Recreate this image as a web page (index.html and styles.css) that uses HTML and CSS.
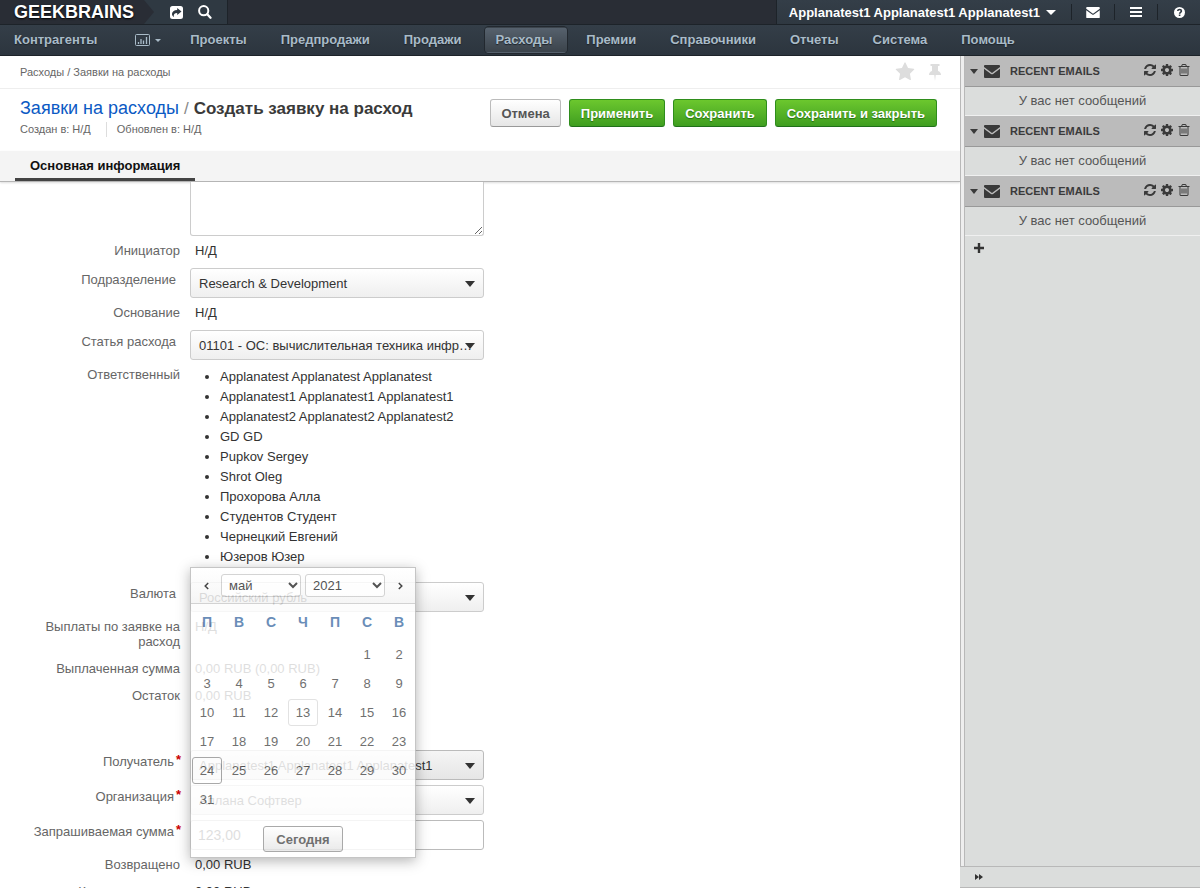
FILE: index.html
```html
<!DOCTYPE html>
<html lang="ru">
<head>
<meta charset="utf-8">
<title>Создать заявку на расход</title>
<link rel="stylesheet" href="styles.css">
</head>
<body>
<svg class="sprite" aria-hidden="true">
  <symbol id="i-mail" viewBox="0 0 16 13"><path fill="currentColor" d="M1 0h14q1 0 1 1v1L8 8 0 2V1Q0 0 1 0zM0 3.700l7 5.200q1 .7 2 0l7-5.200V12q0 1-1 1H1q-1 0-1-1z"/></symbol>
  <symbol id="i-refresh" viewBox="0 0 1792 1792"><path fill="currentColor" d="M1639 1056q0 5-1 7-64 268-268 434.500t-478 166.500q-146 0-282.500-55t-243.500-157l-129 129q-19 19-45 19t-45-19-19-45v-448q0-26 19-45t45-19h448q26 0 45 19t19 45-19 45l-137 137q71 66 161 102t187 36q134 0 250-65t186-179q11-17 53-117 8-23 30-23h192q13 0 22.500 9.500t9.500 22.500zm25-800v448q0 26-19 45t-45 19h-448q-26 0-45-19t-19-45 19-45l138-138q-148-137-349-137-134 0-250 65t-186 179q-11 17-53 117-8 23-30 23h-199q-13 0-22.500-9.500t-9.500-22.500v-7q65-268 270-434.500t480-166.500q146 0 284 55.500t245 156.500l130-129q19-19 45-19t45 19 19 45z"/></symbol>
  <symbol id="i-cog" viewBox="0 0 1792 1792"><path fill="currentColor" d="M1152 896q0-106-75-181t-181-75-181 75-75 181 75 181 181 75 181-75 75-181zm512-109v222q0 12-8 23t-20 13l-185 28q-19 54-39 91 35 50 107 138 10 12 10 25t-9 23q-27 37-99 108t-94 71q-12 0-26-9l-138-108q-44 23-91 38-16 136-29 186-7 28-36 28h-222q-14 0-24.500-8.500t-11.500-21.500l-28-184q-49-16-90-37l-141 107q-10 9-25 9-14 0-25-11-126-114-165-168-7-10-7-23 0-12 8-23 15-21 51-66.500t54-70.500q-27-50-41-99l-183-27q-13-2-21-12.500t-8-23.500v-222q0-12 8-23t19-13l186-28q14-46 39-92-40-57-107-138-10-12-10-24 0-10 9-23 26-36 98.500-107.500t94.500-71.500q13 0 26 10l138 107q44-23 91-38 16-136 29-186 7-28 36-28h222q14 0 24.500 8.500t11.500 21.500l28 184q49 16 90 37l142-107q9-9 24-9 13 0 25 10 129 119 165 170 7 8 7 22 0 12-8 23-15 21-51 66.500t-54 70.500q26 50 41 98l183 28q13 2 21 12.500t8 23.500z"/></symbol>
  <symbol id="i-trash" viewBox="0 0 1792 1792"><path fill="currentColor" d="M704 736v576q0 14-9 23t-23 9h-64q-14 0-23-9t-9-23v-576q0-14 9-23t23-9h64q14 0 23 9t9 23zm256 0v576q0 14-9 23t-23 9h-64q-14 0-23-9t-9-23v-576q0-14 9-23t23-9h64q14 0 23 9t9 23zm256 0v576q0 14-9 23t-23 9h-64q-14 0-23-9t-9-23v-576q0-14 9-23t23-9h64q14 0 23 9t9 23zm128 724v-948h-896v948q0 22 7 40.500t14.500 27 10.500 8.500h832q3 0 10.500-8.500t14.500-27 7-40.500zm-672-1076h448l-48-117q-7-9-17-11h-317q-10 2-17 11zm928 32v64q0 14-9 23t-23 9h-96v948q0 83-47 143.500t-113 60.500h-832q-66 0-113-58.500t-47-141.500v-952h-96q-14 0-23-9t-9-23v-64q0-14 9-23t23-9h309l70-167q15-37 54-63t79-26h320q40 0 79 26t54 63l70 167h309q14 0 23 9t9 23z"/></symbol>
</svg>

<header class="topbar">
  <div class="brand"><a class="brand-name" href="#">GEEKBRAINS</a></div>
  <div class="quick">
    <button class="icon-btn" type="button" aria-label="Поделиться"><svg width="13" height="13" viewBox="0 0 13 13"><path fill="#fff" fill-rule="evenodd" d="M2.500 0h8Q13 0 13 2.500v8Q13 13 10.500 13h-8Q0 13 0 10.500v-8Q0 0 2.500 0zM7.200 2v1.900C4 4 2 5.700 2 8.100c0 1.300.8 2.400 1.900 3-.6-2.700.5-4.200 3.300-4.200v2L11.500 5.400z"/></svg></button>
    <button class="icon-btn" type="button" aria-label="Поиск"><svg width="14" height="14" viewBox="0 0 14 14" fill="none" stroke="#fff" stroke-width="2"><circle cx="5.700" cy="5.700" r="4.600"/><path stroke-linecap="round" stroke-width="2.300" d="M9.300 9.300l3.200 3.400"/></svg></button>
  </div>
  <div class="account">
    <button class="user" type="button">Applanatest1 Applanatest1 Applanatest1 <span class="caret"></span></button>
    <button class="tool" type="button" aria-label="Почта"><svg width="14" height="11"><use href="#i-mail"/></svg></button>
    <button class="tool" type="button" aria-label="Меню"><svg width="12" height="10" viewBox="0 0 12 10"><path fill="#fff" d="M0 0h12v2H0zM0 4h12v2H0zM0 8h12v2H0z"/></svg></button>
    <button class="tool" type="button" aria-label="Справка"><svg width="11" height="11" viewBox="0 0 11 11"><circle cx="5.500" cy="5.500" r="5.500" fill="#fff"/><path d="M3.700 4c.2-2 3.700-2 3.700.1C7.400 5.300 5.600 5.300 5.600 6.700M5.600 7.600v1.500" fill="none" stroke="#2e3740" stroke-width="1.600"/></svg></button>
  </div>
</header>

<nav class="menu">
  <a href="#">Контрагенты</a>
  <a class="chart" href="#" aria-label="Отчёты"><svg width="15" height="12" viewBox="0 0 15 12" fill="none" stroke="currentColor"><rect x=".5" y=".5" width="14" height="11" rx="1"/><path d="M3.500 10V8M6 10V5M8.500 10V6.500M11.500 10V3" stroke-width="1.300"/></svg><span class="caret caret-small"></span></a>
  <a href="#">Проекты</a>
  <a href="#">Предпродажи</a>
  <a href="#">Продажи</a>
  <a class="active" href="#">Расходы</a>
  <a href="#">Премии</a>
  <a href="#">Справочники</a>
  <a href="#">Отчеты</a>
  <a href="#">Система</a>
  <a href="#">Помощь</a>
</nav>

<div class="layout">
  <main class="main">
    <div class="crumbs">
      <span class="crumb-path"><a href="#">Расходы</a> / <a href="#">Заявки на расходы</a></span>
      <button class="mark" type="button" aria-label="В избранное"><svg width="20" height="20" viewBox="0 0 1792 1792"><path fill="#ddd" d="M1728 647q0 22-26 48l-363 354 86 500q1 7 1 20 0 21-10.500 35.500t-30.500 14.500q-19 0-40-12l-449-236-449 236q-22 12-40 12-21 0-31.500-14.500t-10.500-35.500q0-6 2-20l86-500-364-354q-25-27-25-48 0-37 56-46l502-73 225-455q19-41 49-41t49 41l225 455 502 73q56 9 56 46z"/></svg></button>
      <button class="mark" type="button" aria-label="Закрепить"><svg width="12" height="17" viewBox="0 0 12 17"><path fill="#ddd" d="M1.500 0h9v2H9v5c1.800.6 3 1.800 3 4H6.700L6 17l-.7-6H0c0-2.200 1.200-3.400 3-4V2H1.500z"/></svg></button>
    </div>

    <div class="heading">
      <div class="heading-text">
        <h1><a href="#">Заявки на расходы</a><span class="slash">/</span>Создать заявку на расход</h1>
        <div class="stamps"><span>Создан в: Н/Д</span><span>Обновлен в: Н/Д</span></div>
      </div>
      <div class="actions">
        <button class="btn btn-cancel" type="button">Отмена</button>
        <button class="btn btn-green" type="button">Применить</button>
        <button class="btn btn-green" type="button">Сохранить</button>
        <button class="btn btn-green" type="button">Сохранить и закрыть</button>
      </div>
    </div>

    <div class="tabs"><a class="tab" href="#">Основная информация</a></div>

    <form class="form">
      <div class="row"><span class="label"></span><textarea class="notes" aria-label="Описание"></textarea></div>
      <div class="row"><span class="label">Инициатор</span><span class="value">Н/Д</span></div>
      <div class="row control"><label class="label" for="dep">Подразделение</label><span class="pick"><select id="dep"><option>Research &amp; Development</option></select></span></div>
      <div class="row"><span class="label">Основание</span><span class="value">Н/Д</span></div>
      <div class="row control"><label class="label" for="item">Статья расхода</label><span class="pick"><select id="item"><option>01101 - ОС: вычислительная техника инфраструктура</option></select></span></div>
      <div class="row"><span class="label">Ответственный</span>
        <ul class="people">
          <li>Applanatest Applanatest Applanatest</li>
          <li>Applanatest1 Applanatest1 Applanatest1</li>
          <li>Applanatest2 Applanatest2 Applanatest2</li>
          <li>GD GD</li>
          <li>Pupkov Sergey</li>
          <li>Shrot Oleg</li>
          <li>Прохорова Алла</li>
          <li>Студентов Студент</li>
          <li>Чернецкий Евгений</li>
          <li>Юзеров Юзер</li>
        </ul>
      </div>
      <div class="row control"><label class="label" for="cur">Валюта</label>
        <span class="pick"><select id="cur"><option>Российский рубль</option></select></span>
        <div class="calendar">
          <div class="cal-head">
            <button class="cal-nav" type="button" aria-label="Предыдущий месяц"><svg width="5" height="8" viewBox="0 0 5 8"><path d="M4.200 1L1.200 4l3 3" fill="none" stroke="#222" stroke-width="1.500"/></svg></button>
            <span class="cal-pick"><select aria-label="Месяц"><option>май</option></select><svg width="10" height="7" viewBox="0 0 10 7"><path d="M1 1l4 4 4-4" fill="none" stroke="#333" stroke-width="2"/></svg></span>
            <span class="cal-pick"><select aria-label="Год"><option>2021</option></select><svg width="10" height="7" viewBox="0 0 10 7"><path d="M1 1l4 4 4-4" fill="none" stroke="#333" stroke-width="2"/></svg></span>
            <button class="cal-nav" type="button" aria-label="Следующий месяц"><svg width="5" height="8" viewBox="0 0 5 8"><path d="M.8 1l3 3-3 3" fill="none" stroke="#222" stroke-width="1.500"/></svg></button>
          </div>
          <table class="days">
            <thead><tr><th>П</th><th>В</th><th>С</th><th>Ч</th><th>П</th><th>С</th><th>В</th></tr></thead>
            <tbody>
              <tr><td></td><td></td><td></td><td></td><td></td><td><a href="#">1</a></td><td><a href="#">2</a></td></tr>
              <tr><td><a href="#">3</a></td><td><a href="#">4</a></td><td><a href="#">5</a></td><td><a href="#">6</a></td><td><a href="#">7</a></td><td><a href="#">8</a></td><td><a href="#">9</a></td></tr>
              <tr><td><a href="#">10</a></td><td><a href="#">11</a></td><td><a href="#">12</a></td><td><a class="today" href="#">13</a></td><td><a href="#">14</a></td><td><a href="#">15</a></td><td><a href="#">16</a></td></tr>
              <tr><td><a href="#">17</a></td><td><a href="#">18</a></td><td><a href="#">19</a></td><td><a href="#">20</a></td><td><a href="#">21</a></td><td><a href="#">22</a></td><td><a href="#">23</a></td></tr>
              <tr><td><a class="chosen" href="#">24</a></td><td><a href="#">25</a></td><td><a href="#">26</a></td><td><a href="#">27</a></td><td><a href="#">28</a></td><td><a href="#">29</a></td><td><a href="#">30</a></td></tr>
              <tr><td><a href="#">31</a></td><td></td><td></td><td></td><td></td><td></td><td></td></tr>
            </tbody>
          </table>
          <div class="cal-foot"><button class="btn btn-today" type="button">Сегодня</button></div>
        </div>
      </div>
      <div class="row"><span class="label">Выплаты по заявке на расход</span><span class="value">Н/Д</span></div>
      <div class="row"><span class="label">Выплаченная сумма</span><span class="value">0,00 RUB (0,00 RUB)</span></div>
      <div class="row row-last"><span class="label">Остаток</span><span class="value">0,00 RUB</span></div>
      <div class="row control required"><label class="label" for="rcv">Получатель<span class="star">*</span></label><span class="pick pick-grey"><select id="rcv"><option>Applanatest1 Applanatest1 Applanatest1</option></select></span></div>
      <div class="row control required"><label class="label" for="org">Организация<span class="star">*</span></label><span class="pick"><select id="org"><option>Аплана Софтвер</option></select></span></div>
      <div class="row control required"><label class="label" for="sum">Запрашиваемая сумма<span class="star">*</span></label><input class="sum" id="sum" type="text" value="123,00"></div>
      <div class="row"><span class="label">Возвращено</span><span class="value">0,00 RUB</span></div>
      <div class="row"><span class="label">Компенсировано</span><span class="value">0,00 RUB</span></div>
    </form>
  </main>

  <aside class="side">
    <div class="widgets">
      <section class="widget">
        <h2><span class="caret caret-dark"></span><svg class="env" width="16" height="13"><use href="#i-mail"/></svg><span class="widget-name">RECENT EMAILS</span>
          <button type="button" aria-label="Обновить"><svg width="14" height="14"><use href="#i-refresh"/></svg></button><button type="button" aria-label="Настроить"><svg width="14" height="14"><use href="#i-cog"/></svg></button><button type="button" aria-label="Удалить"><svg width="14" height="14"><use href="#i-trash"/></svg></button></h2>
        <p>У вас нет сообщений</p>
      </section>
      <section class="widget">
        <h2><span class="caret caret-dark"></span><svg class="env" width="16" height="13"><use href="#i-mail"/></svg><span class="widget-name">RECENT EMAILS</span>
          <button type="button" aria-label="Обновить"><svg width="14" height="14"><use href="#i-refresh"/></svg></button><button type="button" aria-label="Настроить"><svg width="14" height="14"><use href="#i-cog"/></svg></button><button type="button" aria-label="Удалить"><svg width="14" height="14"><use href="#i-trash"/></svg></button></h2>
        <p>У вас нет сообщений</p>
      </section>
      <section class="widget">
        <h2><span class="caret caret-dark"></span><svg class="env" width="16" height="13"><use href="#i-mail"/></svg><span class="widget-name">RECENT EMAILS</span>
          <button type="button" aria-label="Обновить"><svg width="14" height="14"><use href="#i-refresh"/></svg></button><button type="button" aria-label="Настроить"><svg width="14" height="14"><use href="#i-cog"/></svg></button><button type="button" aria-label="Удалить"><svg width="14" height="14"><use href="#i-trash"/></svg></button></h2>
        <p>У вас нет сообщений</p>
      </section>
      <button class="add" type="button" aria-label="Добавить"><svg width="10" height="10" viewBox="0 0 10 10"><path d="M5 0v10M0 5h10" stroke="#333" stroke-width="2.400"/></svg></button>
    </div>
    <div class="side-foot"><button type="button" aria-label="Свернуть"><svg width="8" height="6" viewBox="0 0 8 6"><path fill="#333" d="M0 0l4 3V0l4 3-4 3V3L0 6z"/></svg></button></div>
  </aside>
</div>
</body>
</html>
```
FILE: styles.css
```css
* { box-sizing: border-box; }

body {
  display: flex;
  flex-direction: column;
  height: 100vh;
  margin: 0;
  overflow: hidden;
  background: #fff;
  color: #333;
  font: 13px/15px "Liberation Sans", Arial, sans-serif;
}

a { color: inherit; text-decoration: none; }
button, select, input, textarea { font: inherit; color: inherit; }
button { padding: 0; border: 0; background: none; }
svg { display: block; }
.sprite { position: absolute; width: 0; height: 0; }

.caret {
  display: inline-block;
  border: 5px solid transparent;
  border-top-color: currentColor;
  border-bottom: 0;
}
.caret-small { border-width: 3px 3px 0; }
.caret-dark { border-width: 5px 4px 0; }

/* Top bar */
.topbar {
  display: flex;
  flex: none;
  height: 25px;
  border-bottom: 1px solid #1d2329;
  background: #292d35;
  color: #fff;
}
.brand {
  z-index: 1;
  width: 154px;
  margin-right: -10px;
  padding-left: 14px;
  background: #292d35;
  clip-path: polygon(0 0, 144px 0, 154px 12px, 144px 24px, 0 24px);
}
.brand-name {
  font-size: 18px;
  font-weight: bold;
  line-height: 24px;
  text-shadow: 0 1px 2px #000;
}
.quick {
  display: flex;
  align-items: center;
  gap: 15px;
  padding: 0 15px 0 26px;
  border-right: 1px solid #1d2329;
  background: #2f3942;
}
.account {
  display: flex;
  align-items: center;
  margin-left: auto;
  border-left: 1px solid #1d2329;
  background: linear-gradient(#343e48, #2f3841);
}
.user {
  display: flex;
  align-items: center;
  gap: 6px;
  padding: 0 15px 0 12px;
  font-weight: bold;
}
.tool {
  display: flex;
  justify-content: center;
  align-items: center;
  width: 43px;
  height: 16px;
  border-left: 1px solid #1d2329;
}

/* Main menu */
.menu {
  display: flex;
  flex: none;
  align-items: center;
  gap: 9px;
  height: 31px;
  padding: 0 4px;
  border-bottom: 1px solid #1d2329;
  background: linear-gradient(#343e48, #2c353e);
  color: #a9bbc8;
  font-weight: bold;
}
.menu a {
  height: 26px;
  padding: 0 15px 0 10px;
  border: 1px solid transparent;
  border-width: 1px 0;
  border-radius: 4px;
  line-height: 24px;
  text-shadow: 0 1px 1px #1d2329;
}
.menu .chart { display: flex; align-items: center; gap: 5px; margin-left: 4px; padding-right: 10px; }
.menu .active {
  background: linear-gradient(#56616d, #3b434b);
  box-shadow: 0 0 0 1px #22282f;
}

/* Page layout */
.layout { display: flex; flex: 1; min-height: 0; }
.main { display: flex; flex: 1; flex-direction: column; min-width: 0; }

.crumbs {
  display: flex;
  flex: none;
  align-items: center;
  gap: 14px;
  height: 33px;
  padding: 0 19px 0 20px;
  border-bottom: 1px solid #eee;
  color: #666;
  font-size: 11px;
}
.crumb-path { flex: 1; }

.heading {
  display: flex;
  flex: none;
  justify-content: space-between;
  padding: 9px 23px 14px 20px;
}
h1 {
  margin: 0;
  color: #3a3a3a;
  font-size: 17px;
  font-weight: bold;
  line-height: 21px;
}
h1 a { color: #0b5ac4; font-size: 18px; font-weight: normal; }
.slash { margin: 0 5px; color: #888; font-weight: normal; }
.stamps { display: flex; padding-top: 3px; color: #666; font-size: 11px; }
.stamps span + span { margin-left: 15px; padding-left: 10px; border-left: 1px solid #ddd; }

.actions { display: flex; align-items: flex-start; gap: 8px; padding-top: 1px; }
.btn {
  height: 28px;
  padding: 0 11px;
  border: 1px solid #bbb;
  border-bottom-color: #999;
  border-radius: 3px;
  background: linear-gradient(#fff, #e6e6e6);
  color: #555;
  font-weight: bold;
}
.btn-cancel { padding: 0 10px; }
.btn-green {
  border-color: #2f8d1c;
  border-bottom-color: #20701a;
  background: linear-gradient(#6cc72e, #3f9e20);
  color: #fff;
  text-shadow: 0 1px 1px #276d14;
}

.tabs {
  display: flex;
  flex: none;
  height: 31px;
  padding-left: 15px;
  border-bottom: 1px solid #b5b5b5;
  background: #f4f4f4;
  box-shadow: 0 1px 2px #ddd;
}
.tab {
  height: 30px;
  padding: 0 15px;
  border-bottom: 3px solid #444;
  color: #111;
  font-weight: bold;
  line-height: 30px;
}

/* Form */
.form { flex: 1; min-height: 0; overflow: hidden; }
.row { display: flex; position: relative; align-items: flex-start; }
.label {
  flex: none;
  width: 190px;
  padding: 7px 10px 5px 40px;
  color: #666;
  text-align: right;
}
.value { padding: 7px 5px 5px; }
.control { margin-top: 5px; }
.control .label { padding: 4px 14px 0 0; }
.required .label { padding-right: 9px; }
.star { padding-left: 2px; color: #c00; font-weight: bold; line-height: 10px; vertical-align: 2px; }
.row-last { margin-bottom: 42px; }

.notes {
  width: 294px;
  height: 54px;
  border: 1px solid #ccc;
  border-top: 0;
  border-radius: 0 0 3px 3px;
}
.pick { position: relative; width: 294px; }
.pick::after {
  content: "";
  position: absolute;
  top: 13px;
  right: 9px;
  border: 5px solid transparent;
  border-top: 6px solid #333;
  border-bottom: 0;
}
.pick select {
  display: block;
  width: 100%;
  height: 30px;
  padding: 0 6px 0 8px;
  overflow: hidden;
  appearance: none;
  border: 1px solid #ccc;
  border-radius: 3px;
  background: linear-gradient(#fff, #efefef);
  text-overflow: ellipsis;
  white-space: nowrap;
}
.pick-grey select { border-color: #bbb; background: linear-gradient(#f5f5f5, #e6e6e6); }
.sum {
  width: 294px;
  height: 30px;
  padding: 0 7px;
  border: 1px solid #bbb;
  border-radius: 3px;
  font-size: 14px;
}
.people { margin: 7px 0 10px; padding: 0 0 0 30px; line-height: 20px; }

/* Date picker */
.calendar {
  position: absolute;
  z-index: 2;
  top: -15px;
  left: 190px;
  width: 226px;
  border: 1px solid #bbb;
  background: #fff;
  box-shadow: 0 3px 12px rgba(0, 0, 0, .35);
  opacity: .84;
}
.cal-head {
  display: flex;
  align-items: center;
  justify-content: center;
  gap: 4px;
  height: 36px;
  border-bottom: 1px solid #ccc;
  background: linear-gradient(#fff, #f6f6f6);
}
.cal-nav { display: flex; justify-content: center; width: 22px; }
.cal-pick { position: relative; width: 80px; }
.cal-pick select {
  display: block;
  width: 100%;
  height: 23px;
  padding: 0 7px;
  appearance: none;
  border: 1px solid #ccc;
  border-radius: 3px;
  background: #fff;
}
.cal-pick svg { position: absolute; top: 8px; right: 3px; }
.days { width: 100%; border-collapse: collapse; table-layout: fixed; text-align: center; }
.days th { height: 36px; padding: 0; color: #4e78ab; font-size: 14px; }
.days td { height: 29px; padding: 1px; color: #555; }
.days a {
  display: block;
  height: 27px;
  border: 1px solid transparent;
  border-radius: 3px;
  line-height: 25px;
}
.days .today { border-color: #ddd; }
.days .chosen { border-color: #999; }
.cal-foot { display: flex; justify-content: center; padding: 12px 0 5px; }
.btn-today { width: 80px; height: 26px; border-color: #999; }

/* Sidebar */
.side { display: flex; flex: none; flex-direction: column; width: 240px; background: #dbdddc; }
.widgets {
  flex: 1;
  border-left: 1px solid #b8b8b8;
  box-shadow: inset 3px 0 #eee, inset 4px 0 #b8b8b8;
  padding-left: 4px;
}
.widget h2 {
  display: flex;
  align-items: center;
  height: 31px;
  margin: 0;
  padding: 0 9px 0 5px;
  border-bottom: 1px solid #999;
  background: #bbb;
  color: #3a3a3a;
  font-size: 11px;
}
.env { margin: 0 10px 0 6px; }
.widget-name { flex: 1; }
.widget button { margin-left: 3px; padding-bottom: 2px; }
.widget p {
  height: 29px;
  margin: 0;
  border-bottom: 1px solid #f0f0f0;
  color: #555;
  line-height: 28px;
  text-align: center;
}
.add { display: block; padding: 7px 9px; }
.side-foot {
  display: flex;
  align-items: center;
  height: 22px;
  padding: 0 15px;
  border: 1px solid #b8b8b8;
  border-width: 1px 0;
}
```
